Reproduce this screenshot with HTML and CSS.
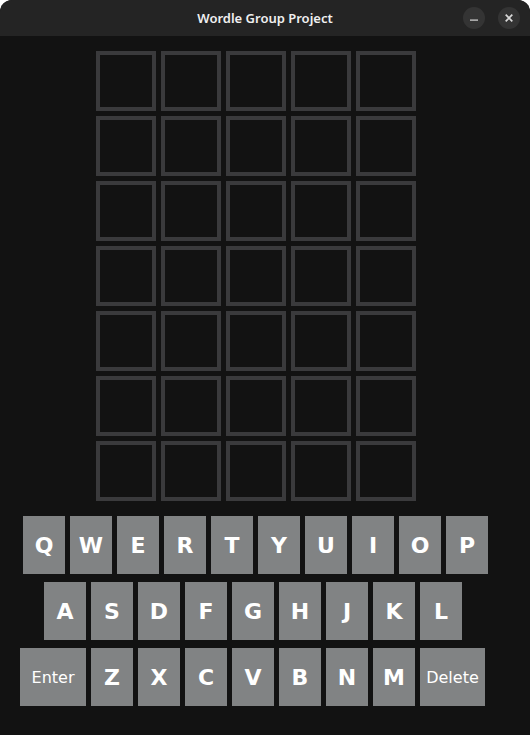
FILE: index.html
```html
<!DOCTYPE html>
<html>
<head>
<meta charset="utf-8">
<title>Wordle Group Project</title>
<link rel="stylesheet" href="styles.css">
</head>
<body>
<div class="window">
  <div class="titlebar">
    <span class="title">Wordle Group Project</span>
    <div class="controls">
      <span class="ctl"><svg width="8" height="8" viewBox="0 0 8 8"><rect x="0" y="5.5" width="8" height="1.2" fill="#d8d8d8"/></svg></span>
      <span class="ctl"><svg width="8" height="8" viewBox="0 0 8 8"><path d="M0.7 0.7L7.3 7.3M7.3 0.7L0.7 7.3" stroke="#d8d8d8" stroke-width="1.7"/></svg></span>
    </div>
  </div>
  <div class="board">
    <div class="cell"></div><div class="cell"></div><div class="cell"></div><div class="cell"></div><div class="cell"></div>
    <div class="cell"></div><div class="cell"></div><div class="cell"></div><div class="cell"></div><div class="cell"></div>
    <div class="cell"></div><div class="cell"></div><div class="cell"></div><div class="cell"></div><div class="cell"></div>
    <div class="cell"></div><div class="cell"></div><div class="cell"></div><div class="cell"></div><div class="cell"></div>
    <div class="cell"></div><div class="cell"></div><div class="cell"></div><div class="cell"></div><div class="cell"></div>
    <div class="cell"></div><div class="cell"></div><div class="cell"></div><div class="cell"></div><div class="cell"></div>
    <div class="cell"></div><div class="cell"></div><div class="cell"></div><div class="cell"></div><div class="cell"></div>
  </div>
  <div class="keyboard">
    <div class="row row1">
      <div class="key">Q</div><div class="key">W</div><div class="key">E</div><div class="key">R</div><div class="key">T</div><div class="key">Y</div><div class="key">U</div><div class="key">I</div><div class="key">O</div><div class="key">P</div>
    </div>
    <div class="row row2">
      <div class="key">A</div><div class="key">S</div><div class="key">D</div><div class="key">F</div><div class="key">G</div><div class="key">H</div><div class="key">J</div><div class="key">K</div><div class="key">L</div>
    </div>
    <div class="row row3">
      <div class="key wide enter">Enter</div><div class="key">Z</div><div class="key">X</div><div class="key">C</div><div class="key">V</div><div class="key">B</div><div class="key">N</div><div class="key">M</div><div class="key wide">Delete</div>
    </div>
  </div>
</div>
</body>
</html>
```
FILE: styles.css
```css
html, body {
  margin: 0;
  padding: 0;
  background: #ffffff;
}
.window {
  width: 530px;
  height: 735px;
  background: #121212;
  border-radius: 12px 12px 0 0;
  overflow: hidden;
  display: flex;
  flex-direction: column;
}
.titlebar {
  height: 36px;
  background: #242424;
  display: flex;
  align-items: center;
  justify-content: center;
  position: relative;
  flex-shrink: 0;
}
.title {
  font-family: "Noto Sans", sans-serif;
  font-weight: 600;
  font-size: 13px;
  color: #f0f0f0;
}
.controls {
  position: absolute;
  right: 10px;
  top: 7px;
  display: flex;
  gap: 13px;
}
.ctl {
  width: 22px;
  height: 22px;
  border-radius: 50%;
  background: #343434;
  display: flex;
  align-items: center;
  justify-content: center;
}
.board {
  margin: 15px 0 0 96px;
  display: grid;
  grid-template-columns: repeat(5, 60px);
  grid-auto-rows: 60px;
  gap: 5px;
}
.cell {
  box-sizing: border-box;
  border: 4px solid #3a3a3c;
  background: #121212;
}
.keyboard {
  margin-top: 15px;
  display: flex;
  flex-direction: column;
  gap: 8px;
}
.row {
  display: flex;
  gap: 5px;
}
.row1 { margin-left: 23px; }
.row2 { margin-left: 44px; }
.row3 { margin-left: 20px; }
.key {
  width: 42px;
  height: 58px;
  background: #818384;
  color: #ffffff;
  font-family: "DejaVu Sans", sans-serif;
  font-weight: bold;
  font-size: 22px;
  display: flex;
  align-items: center;
  justify-content: center;
}
.key.wide {
  width: 65px;
  font-weight: normal;
  font-size: 16px;
}
.key.enter {
  width: 66px;
}
```
